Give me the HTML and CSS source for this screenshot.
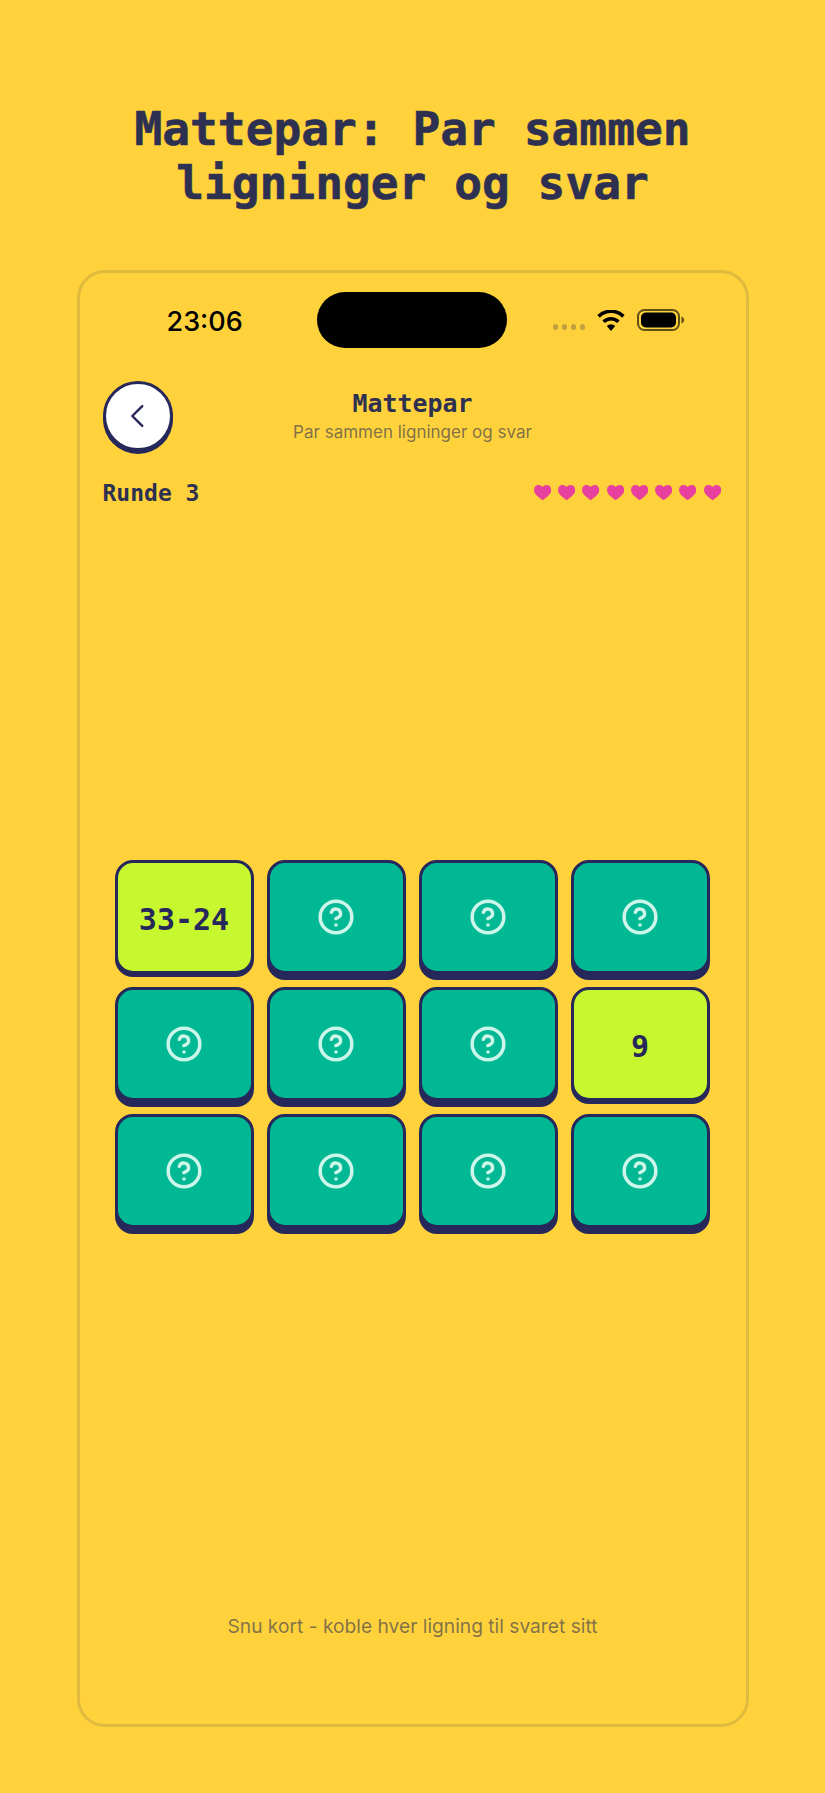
FILE: index.html
```html
<!DOCTYPE html>
<html lang="no">
<head>
<meta charset="utf-8">
<title>Mattepar</title>
<link rel="stylesheet" href="styles.css">
</head>
<body>
<svg class="defs" width="0" height="0" aria-hidden="true">
  <symbol id="help" viewBox="0 0 24 24"><circle cx="12" cy="12" r="10"/><path d="M9.09 9a3 3 0 0 1 5.83 1c0 2-3 3-3 3"/><path d="M12 17h.01"/></symbol>
  <symbol id="heart" viewBox="0 0 18 16"><path d="M9 16C8 15.100 6.200 13.900 4.300 12.200 2 10.200 0 8.200 0 5.100 0 2.200 2.100 0 4.800 0 6.500 0 8.100.8 9 2.200 9.900.8 11.500 0 13.200 0 15.900 0 18 2.200 18 5.100c0 3.100-2 5.100-4.300 7.100C11.800 13.900 10 15.100 9 16z"/></symbol>
</svg>
<h1 class="page-title">Mattepar: Par sammen<br>ligninger og svar</h1>
<div class="phone">
  <div class="status">
    <span class="time">23:06</span>
    <span class="island"></span>
    <div class="status-icons">
      <span class="dots"><i></i><i></i><i></i><i></i></span>
      <svg class="wifi" viewBox="0 0 28 21" width="28" height="21"><path d="M14 21l-4.200-5a6.200 6.200 0 0 1 8.400 0z"/><path class="arc" d="M6.600 11.800a10.600 10.600 0 0 1 14.800 0"/><path class="arc" d="M1.600 6.400a17.600 17.600 0 0 1 24.800 0"/></svg>
      <svg class="battery" viewBox="0 0 48 22" width="48" height="22"><rect class="shell" x="1" y="1" width="41" height="20" rx="6.500"/><rect x="4" y="3.500" width="35" height="15" rx="5"/><path class="cap" d="M44.500 7.500c2 .8 2.600 2 2.600 3.500s-.6 2.700-2.600 3.500z"/></svg>
    </div>
  </div>
  <header class="head">
    <button class="back" type="button" aria-label="Tilbake">
      <svg viewBox="0 0 24 24" width="34" height="34"><path d="M15 5l-7 7 7 7"/></svg>
    </button>
    <div class="head-text">
      <div class="head-title">Mattepar</div>
      <div class="head-sub">Par sammen ligninger og svar</div>
    </div>
  </header>
  <div class="round-row">
    <span class="round">Runde 3</span>
    <div class="hearts">
      <svg><use href="#heart"/></svg><svg><use href="#heart"/></svg><svg><use href="#heart"/></svg><svg><use href="#heart"/></svg><svg><use href="#heart"/></svg><svg><use href="#heart"/></svg><svg><use href="#heart"/></svg><svg><use href="#heart"/></svg>
    </div>
  </div>
  <main class="board">
    <div class="grid">
      <div class="card open">33-24</div>
      <div class="card"><svg><use href="#help"/></svg></div>
      <div class="card"><svg><use href="#help"/></svg></div>
      <div class="card"><svg><use href="#help"/></svg></div>
      <div class="card"><svg><use href="#help"/></svg></div>
      <div class="card"><svg><use href="#help"/></svg></div>
      <div class="card"><svg><use href="#help"/></svg></div>
      <div class="card open">9</div>
      <div class="card"><svg><use href="#help"/></svg></div>
      <div class="card"><svg><use href="#help"/></svg></div>
      <div class="card"><svg><use href="#help"/></svg></div>
      <div class="card"><svg><use href="#help"/></svg></div>
    </div>
  </main>
  <footer class="hint">Snu kort - koble hver ligning til svaret sitt</footer>
</div>
</body>
</html>
```

FILE: styles.css
```css
* { box-sizing: border-box; }
html, body { margin: 0; padding: 0; }
body {
  width: 825px;
  height: 1793px;
  background: #ffd23c;
  color: #2d3050;
  font-family: "Inter", "Liberation Sans", sans-serif;
  overflow: hidden;
}
.defs { display: block; height: 0; }
.page-title {
  margin: 0;
  padding-top: 102px;
  height: 270px;
  font-family: "DejaVu Sans Mono", monospace;
  font-weight: 700;
  font-size: 46.2px;
  line-height: 54px;
  text-align: center;
  color: #2d3050;
  -webkit-text-stroke: 0.6px #2d3050;
}
.phone {
  width: 672px;
  height: 1457px;
  margin: 0 auto;
  border: 3px solid rgba(45, 48, 80, 0.15);
  border-radius: 28px;
  padding: 19px 23px 0;
  display: flex;
  flex-direction: column;
}
.status {
  display: flex;
  align-items: center;
  height: 56px;
  flex: none;
}
.time {
  width: 214px;
  padding-left: 64px;
  padding-top: 3px;
  font-size: 27px;
  font-weight: 500;
  color: #000;
  line-height: 56px;
}
.island {
  width: 190px;
  height: 56px;
  border-radius: 28px;
  background: #000;
  flex: none;
}
.status-icons {
  display: flex;
  align-items: center;
  padding-left: 46px;
}
.dots { display: flex; gap: 3.5px; margin-top: 14px; margin-right: 12px; }
.dots i { width: 5.5px; height: 5.5px; border-radius: 50%; background: rgba(45, 48, 80, 0.3); }
.wifi { margin-top: 0; margin-right: 12px; fill: #000; }
.wifi .arc { fill: none; stroke: #000; stroke-width: 3.6; }
.battery { margin-top: -1px; fill: #000; }
.battery .shell { fill: none; stroke: #000; stroke-opacity: 0.62; stroke-width: 2; }
.battery .cap { fill: #000; fill-opacity: 0.62; }
.head {
  display: grid;
  grid-template-columns: 70px 1fr 70px;
  margin-top: 33px;
  flex: none;
}
.back {
  width: 70px;
  height: 70px;
  padding: 0;
  border: 3px solid #26275a;
  border-radius: 50%;
  background: #fff;
  box-shadow: 0 3px 0 #26275a;
  display: flex;
  align-items: center;
  justify-content: center;
}
.back svg { fill: none; stroke: #26275a; stroke-width: 1.7; stroke-linecap: round; stroke-linejoin: round; }
.head-text { text-align: center; padding-top: 8px; }
.head-title {
  font-family: "DejaVu Sans Mono", monospace;
  font-weight: 700;
  font-size: 24.9px;
  line-height: 30px;
  color: #2d3050;
}
.head-sub {
  font-size: 17px;
  line-height: 24px;
  margin-top: 1px;
  color: rgba(45, 48, 80, 0.62);
}
.round-row {
  display: flex;
  justify-content: space-between;
  align-items: center;
  height: 30px;
  margin-top: 27px;
  flex: none;
}
.round {
  font-family: "DejaVu Sans Mono", monospace;
  font-weight: 700;
  font-size: 23px;
  color: #2d3050;
}
.hearts { display: flex; gap: 7px; margin-top: -1px; margin-right: 1.5px; }
.hearts svg { width: 17.300px; height: 15.400px; fill: #e8409f; }
.board {
  flex: 1;
  margin-top: -3px;
  display: flex;
  align-items: center;
  padding: 0 12px;
}
.grid {
  width: 100%;
  display: grid;
  grid-template-columns: repeat(4, 139px);
  grid-auto-rows: 114px;
  gap: 13px;
}
.card {
  border: 3px solid #26275a;
  border-radius: 18px;
  background: #00b894;
  box-shadow: 0 6px 0 #26275a;
  display: flex;
  align-items: center;
  justify-content: center;
}
.card svg {
  width: 38px;
  height: 38px;
  fill: none;
  stroke: #cdf6ea;
  stroke-width: 2.2;
  stroke-linecap: round;
  stroke-linejoin: round;
}
.card.open {
  background: #c6f72f;
  box-shadow: 0 3px 0 #26275a;
  padding-top: 4px;
  font-family: "DejaVu Sans Mono", monospace;
  font-weight: 700;
  font-size: 30px;
  color: #26275a;
}
.hint {
  flex: none;
  height: 141px;
  padding-top: 30px;
  text-align: center;
  font-size: 19.200px;
  line-height: 26px;
  color: rgba(45, 48, 80, 0.6);
}
```
